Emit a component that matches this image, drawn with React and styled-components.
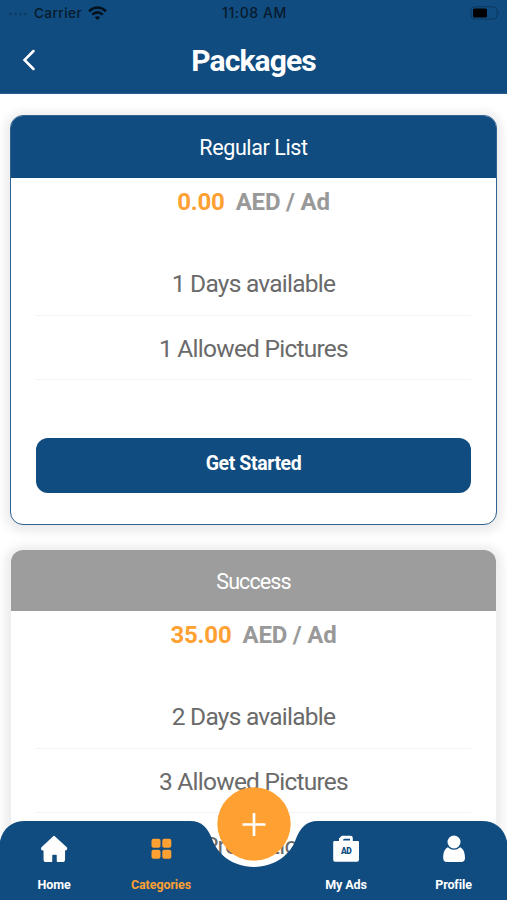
import React from 'react';
import styled, { createGlobalStyle } from 'styled-components';

const BLUE = '#104c7f';
const ORANGE = '#ffa033';

const Global = createGlobalStyle`
  * { box-sizing: border-box; }
  html, body { margin: 0; padding: 0; overflow: hidden; background: #fff; }
  body { font-family: Roboto, "Open Sans", sans-serif; }
`;

const Screen = styled.main`
  position: relative;
  width: 507px;
  height: 900px;
  overflow: hidden;
  display: flex;
  flex-direction: column;
  background: #fff;
`;

const Header = styled.header`
  height: 94px;
  flex: none;
  background: ${BLUE};
  border-bottom: 1px solid #2a6192;
`;

const StatusBar = styled.div`
  height: 26px;
  padding: 0 7px 0 9px;
  display: grid;
  grid-template-columns: 1fr auto 1fr;
  align-items: center;
  font: 500 13.5px/26px Inter, sans-serif;
  letter-spacing: 0.45px;
  color: #071a2c;
`;

const Carrier = styled.div`
  display: flex;
  align-items: center;
  gap: 6px;
`;

const Time = styled.span`
  font-size: 14px;
  letter-spacing: 0.6px;
`;

const Battery = styled.svg`
  justify-self: end;
`;

const TitleBar = styled.div`
  height: 67px;
  padding: 0 20px;
  display: grid;
  grid-template-columns: 24px 1fr 24px;
  align-items: center;
`;

const Back = styled.button`
  display: flex;
  padding: 0;
  border: 0;
  background: none;
`;

const Title = styled.h1`
  margin: 3px 0 0;
  text-align: center;
  color: #fff;
  font-size: 30px;
  font-weight: 700;
  line-height: 40px;
  letter-spacing: -0.9px;
`;

const List = styled.section`
  flex: 1;
  min-height: 0;
  overflow: hidden;
  padding: 21px 10px 0;
  display: flex;
  flex-direction: column;
  gap: 24px;
`;

const Card = styled.article`
  flex: none;
  height: 410px;
  border: ${p => (p.$active ? '1.5px solid #2f6492' : '1.5px solid transparent')};
  border-radius: 13px;
  background: #fff;
  background-clip: padding-box;
  overflow: hidden;
  box-shadow: 0 2px 10px 5px rgba(0, 0, 0, 0.08);
`;

const CardTitle = styled.h2`
  margin: 0;
  height: ${p => (p.$active ? 62 : 61)}px;
  text-align: center;
  font-size: 21.5px;
  font-weight: 400;
  line-height: 63px;
  letter-spacing: ${p => (p.$active ? -0.4 : -0.9)}px;
  color: #fff;
  background: ${p => (p.$active ? BLUE : '#9d9d9d')};
`;

const Price = styled.p`
  margin: 0;
  height: 73px;
  display: flex;
  justify-content: center;
  gap: 11px;
  font-size: 24px;
  font-weight: 700;
  line-height: 48px;
  letter-spacing: -0.2px;
  color: #999;
`;

const Amount = styled.span`
  color: ${ORANGE};
`;

const Features = styled.ul`
  list-style: none;
  margin: 0 25px;
  padding: 0;
`;

const Feature = styled.li`
  height: 64.5px;
  border-bottom: 1px solid #f3f3f3;
  text-align: center;
  font-size: 24.5px;
  font-weight: 400;
  line-height: 65px;
  letter-spacing: -0.75px;
  color: #6a6a6a;
`;

const Start = styled.button`
  display: block;
  width: calc(100% - 50px);
  height: 55px;
  margin: 58px 25px 0;
  padding: 0 0 5px;
  border: 0;
  border-radius: 12px;
  background: ${BLUE};
  color: #fff;
  font: 700 19.5px Roboto, sans-serif;
  letter-spacing: -0.4px;
`;

const Dock = styled.nav`
  position: absolute;
  left: 0;
  right: 0;
  bottom: 0;
  height: 113px;
`;

const DockShape = styled.svg`
  position: absolute;
  inset: 0;
`;

const Tabs = styled.div`
  position: relative;
  height: 100%;
  padding-top: 48px;
  display: grid;
  grid-template-columns: 108px 106px 78px 108px 107px;
`;

const Tab = styled.a`
  grid-column: ${p => p.$column};
  display: flex;
  flex-direction: column;
  align-items: center;
  gap: 14px;
  color: ${p => (p.$active ? ORANGE : '#fff')};
  font-size: 12.5px;
  font-weight: 700;
  line-height: 16px;
  letter-spacing: -0.1px;
`;

const TabIcon = styled.svg.attrs({ width: 28, height: 28, viewBox: '0 0 28 28', fill: 'currentColor' })`
  display: block;
  flex: none;
`;

const BagText = styled.text`
  font: 900 8.5px Roboto, sans-serif;
  fill: ${BLUE};
  text-anchor: middle;
  letter-spacing: -0.5px;
`;

function Package({ active, name, price, features }) {
  return (
    <Card $active={active}>
      <CardTitle $active={active}>{name}</CardTitle>
      <Price><Amount>{price}</Amount><span>AED / Ad</span></Price>
      <Features>
        {features.map(f => <Feature key={f}>{f}</Feature>)}
      </Features>
      {active && <Start>Get Started</Start>}
    </Card>
  );
}

export default function App() {
  return (
    <Screen>
      <Global />
      <Header>
        <StatusBar>
          <Carrier>
            <svg width="19" height="6" fill="#0c3a63"><circle cx="1.5" cy="4" r="1.2" /><circle cx="6.5" cy="4" r="1.2" /><circle cx="11.5" cy="4" r="1.2" /><circle cx="16.5" cy="4" r="1.2" /></svg>
            <span>Carrier</span>
            <svg width="19" height="15" viewBox="0 0 19 15" fill="none" stroke="#03101d" strokeWidth="2.5"><path d="M1 5.2Q9.5-2.2 18 5.2M4.2 8.6q5.3-4.4 10.6 0" /><path d="M6.8 11.3q2.7-2 5.4 0L9.5 14z" fill="#03101d" stroke="none" /></svg>
          </Carrier>
          <Time>11:08 AM</Time>
          <Battery width="30" height="14" viewBox="0 0 30 14"><rect x="1" y=".8" width="26" height="12.4" rx="3.5" fill="none" stroke="#0b3961" /><rect x="3" y="2.5" width="14" height="9" rx="1.6" fill="#000" /><path d="M28.500 5q1.8 2 0 4z" fill="#0b3961" /></Battery>
        </StatusBar>
        <TitleBar>
          <Back aria-label="Back"><svg width="20" height="24" viewBox="0 0 20 24" fill="none" stroke="#fff" strokeWidth="2.5" strokeLinecap="round"><path d="M13.500 3 4.500 12l9 9" /></svg></Back>
          <Title>Packages</Title>
        </TitleBar>
      </Header>
      <List>
        <Package active name="Regular List" price="0.00" features={['1 Days available', '1 Allowed Pictures']} />
        <Package name="Success" price="35.00" features={['2 Days available', '3 Allowed Pictures', '2 Promotions']} />
      </List>
      <Dock>
        <DockShape width="507" height="113" viewBox="0 0 507 113">
          <path fill={BLUE} d="M0 113V54C3 41 12 34 25 34H190C202 34 208 41 212.500 53C217 66 232 80 254 80C276 80 291 66 295.500 53C300 41 306 34 318 34H482C495 34 504 41 507 54V113Z" />
          <circle cx="254" cy="37" r="36.7" fill={ORANGE} />
          <path d="M254 26v23M242.5 37.5h23" stroke="#fff" strokeWidth="2.7" />
        </DockShape>
        <Tabs>
          <Tab $column={1}>
            <TabIcon>
              <path stroke="currentColor" strokeWidth="1.5" strokeLinejoin="round" d="M14 1.500 26.300 12.700Q27 14.500 25 14.800H24.300V24.500Q24.300 26.300 22.500 26.300H17.500V20.500Q17.500 19 16 19H13Q11.500 19 11.500 20.500V26.300H6Q4.300 26.300 4.300 24.500V14.800H3Q1.200 14.500 2 12.700Z" />
            </TabIcon>
            Home
          </Tab>
          <Tab $column={2} $active>
            <TabIcon>
              <rect x="4.5" y="3.8" width="9" height="9" rx="2" />
              <rect x="15.3" y="3.8" width="9" height="9" rx="2" />
              <rect x="4.5" y="14.7" width="9" height="9" rx="2" />
              <rect x="15.3" y="14.7" width="9" height="9" rx="2" />
            </TabIcon>
            Categories
          </Tab>
          <Tab $column={4}>
            <TabIcon>
              <path d="M2.500 6H7V3.500L9.800 0.800H18.500Q20.800 0.800 20.800 3V6H25.800Q27 6 27 7.200V24.800Q27 26.800 25 26.800H3Q1.200 26.800 1.200 24.800V7.200Q1.200 6 2.500 6Z" />
              <path d="M11 5.500H18V3.800H12.500Q11 3.800 11 5.500Z" fill={BLUE} />
              <BagText x="14.2" y="19.2">AD</BagText>
            </TabIcon>
            My Ads
          </Tab>
          <Tab $column={5}>
            <TabIcon>
              <circle cx="14" cy="7" r="6.5" />
              <path d="M7.800 12.200Q14 17.200 20.200 12.200C23.500 14 25 17.500 25 23Q25 27 21 27H7Q3.200 27 3.200 23C3.200 17.500 4.500 14 7.800 12.200Z" />
            </TabIcon>
            Profile
          </Tab>
        </Tabs>
      </Dock>
    </Screen>
  );
}
